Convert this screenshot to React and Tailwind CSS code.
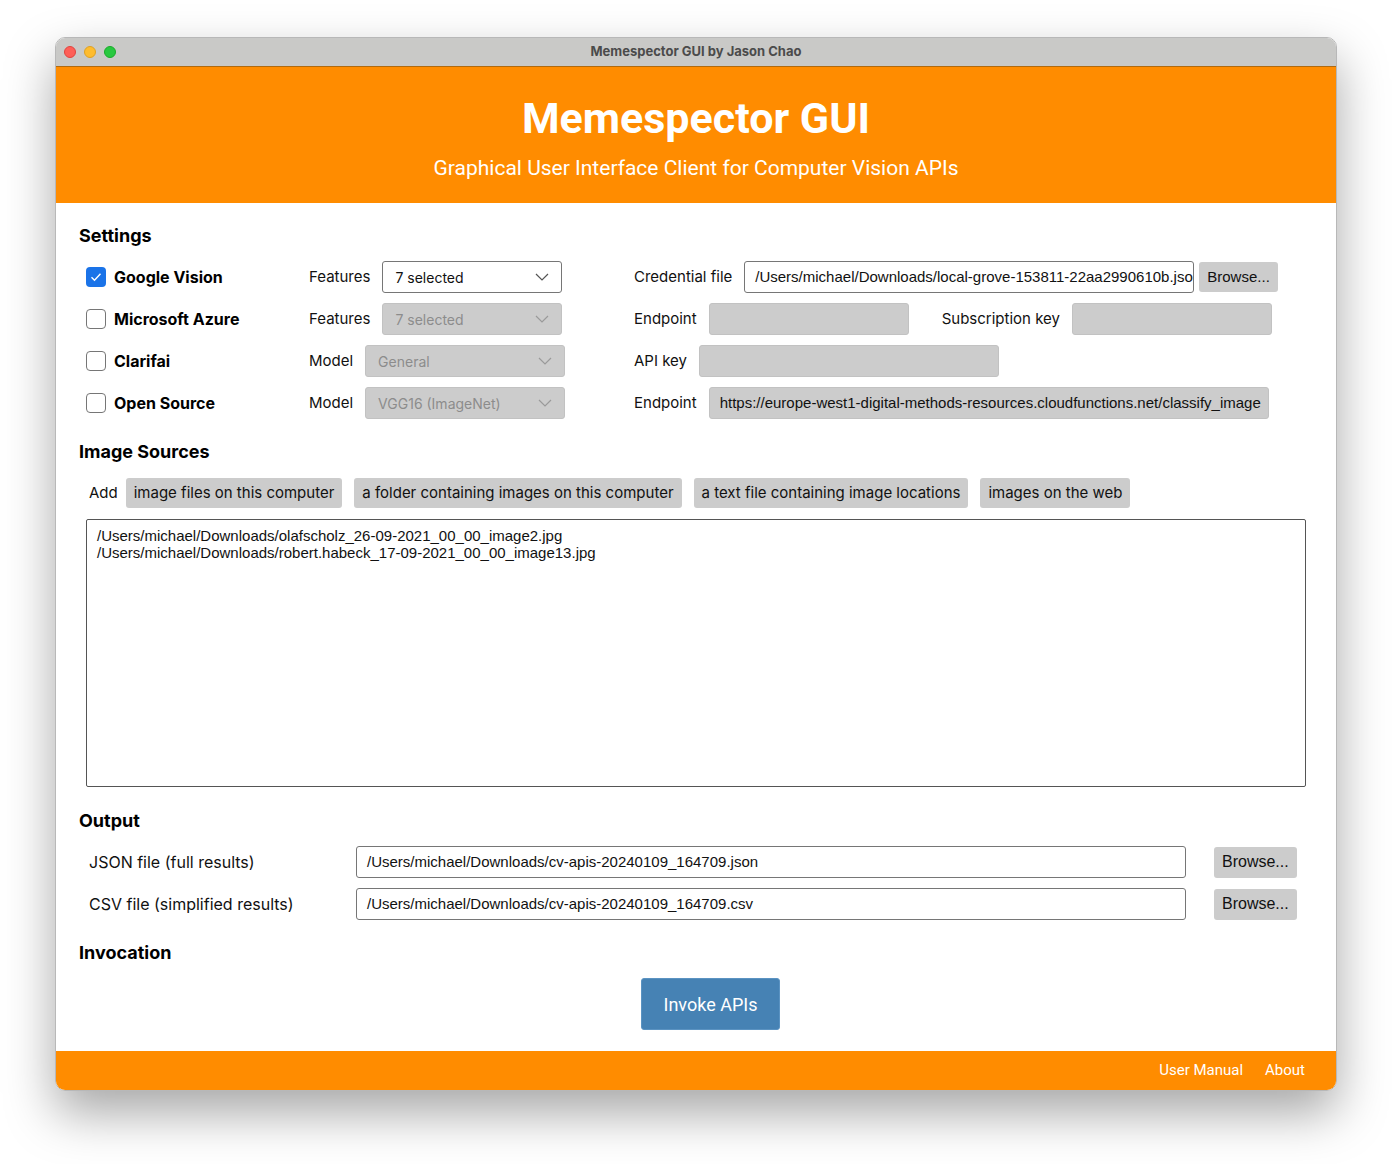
import React from 'react';

const Chevron = ({ className = '' }) => (
  <svg width="14" height="8" viewBox="0 0 14 8" className={className} fill="none">
    <path d="M1 1l6 6 6-6" stroke="currentColor" strokeWidth="1.2" />
  </svg>
);

const Checkbox = ({ checked }) =>
  checked ? (
    <div className="w-[20px] h-[20px] rounded-[4px] bg-[#1a73e8] flex items-center justify-center">
      <svg width="12" height="10" viewBox="0 0 12 10" fill="none">
        <path d="M1.5 5.2l3 3 6-6.5" stroke="white" strokeWidth="1.4" />
      </svg>
    </div>
  ) : (
    <div className="w-[20px] h-[20px] rounded-[4px] bg-white border border-[#767676]" />
  );

const Select = ({ value, width, disabled }) => (
  <div
    className={`${width} h-[32px] rounded-[3px] flex items-center justify-between pl-3 pr-3 text-[14px] ${
      disabled
        ? 'bg-[#cccccc] border border-[#c2c2c2] text-[#8c8c8c]'
        : 'bg-white border border-[#767676] text-[#111]'
    }`}
  >
    <span>{value}</span>
    <Chevron className={disabled ? 'text-[#9a9a9a]' : 'text-[#555]'} />
  </div>
);

const Input = ({ value = '', width, disabled }) => (
  <div
    className={`${width} h-[32px] rounded-[3px] flex items-center px-[10px] text-[15px] overflow-hidden whitespace-nowrap font-['Liberation_Sans',sans-serif] ${
      disabled ? 'bg-[#cccccc] border border-[#c2c2c2] text-[#111]' : 'bg-white border border-[#767676] text-[#111]'
    }`}
  >
    {value}
  </div>
);

const GrayButton = ({ children, className = '' }) => (
  <button className={`h-[30px] px-2 rounded-[3px] bg-[#cccccc] text-[15px] text-[#111] ${className}`}>
    {children}
  </button>
);

const SettingRow = ({ checked, name, mid, right }) => (
  <div className="flex items-center h-[32px] text-[15px]">
    <div className="w-[223px] flex items-center gap-2">
      <Checkbox checked={checked} />
      <span className="text-[16px] font-bold text-black">{name}</span>
    </div>
    <div className="w-[325px] flex items-center gap-3">{mid}</div>
    <div className="flex items-center">{right}</div>
  </div>
);

export default function App() {
  return (
    <div className="min-h-screen bg-white pt-[37px] pl-[55px] font-['Inter',sans-serif]">
      <div className="w-[1282px] rounded-[10px] overflow-hidden shadow-[0_22px_50px_rgba(0,0,0,0.35)] border border-[#b8b8b8]">
        {/* title bar */}
        <div className="h-[29px] bg-[#c9c9c7] border-b border-[#b06a10] flex items-center relative">
          <div className="flex items-center gap-2 pl-[8px]">
            <div className="w-[12px] h-[12px] rounded-full bg-[#fe5f57] border border-[#e0443e]" />
            <div className="w-[12px] h-[12px] rounded-full bg-[#febc2e] border border-[#dea123]" />
            <div className="w-[12px] h-[12px] rounded-full bg-[#28c840] border border-[#1aab29]" />
          </div>
          <div className="absolute inset-0 flex items-center justify-center text-[13px] font-bold text-[#4b4b4b]">
            Memespector GUI by Jason Chao
          </div>
        </div>

        {/* header */}
        <div className="h-[136px] bg-[#ff8c00] flex flex-col items-center text-white">
          <h1 className="mt-[27px] text-[43px] leading-[48px] font-bold font-['Roboto',sans-serif]">Memespector GUI</h1>
          <p className="mt-[13px] text-[21px] leading-[26px] font-['Roboto',sans-serif]">
            Graphical User Interface Client for Computer Vision APIs
          </p>
        </div>

        {/* body */}
        <div className="bg-white pl-[23px] pr-[29px] pt-[21px] pb-[21px] text-[16px] text-[#111]">
          <h2 className="text-[18px] leading-[24px] font-bold text-black">Settings</h2>
          <div className="mt-[13px] pl-[7px] flex flex-col gap-[10px]">
            <SettingRow
              checked
              name="Google Vision"
              mid={
                <>
                  <span>Features</span>
                  <Select value="7 selected" width="w-[180px]" />
                </>
              }
              right={
                <>
                  <span>Credential file</span>
                  <Input
                    width="w-[450px] ml-3"
                    value="/Users/michael/Downloads/local-grove-153811-22aa2990610b.json"
                  />
                  <GrayButton className="ml-[5px] font-['Liberation_Sans',sans-serif]">Browse...</GrayButton>
                </>
              }
            />
            <SettingRow
              name="Microsoft Azure"
              mid={
                <>
                  <span>Features</span>
                  <Select value="7 selected" width="w-[180px]" disabled />
                </>
              }
              right={
                <>
                  <span>Endpoint</span>
                  <Input width="w-[200px] ml-3" disabled />
                  <span className="ml-[33px]">Subscription key</span>
                  <Input width="w-[200px] ml-3" disabled />
                </>
              }
            />
            <SettingRow
              name="Clarifai"
              mid={
                <>
                  <span>Model</span>
                  <Select value="General" width="w-[200px]" disabled />
                </>
              }
              right={
                <>
                  <span>API key</span>
                  <Input width="w-[300px] ml-3" disabled />
                </>
              }
            />
            <SettingRow
              name="Open Source"
              mid={
                <>
                  <span>Model</span>
                  <Select value="VGG16 (ImageNet)" width="w-[200px]" disabled />
                </>
              }
              right={
                <>
                  <span>Endpoint</span>
                  <Input
                    width="w-[560px] ml-3"
                    disabled
                    value="https://europe-west1-digital-methods-resources.cloudfunctions.net/classify_image"
                  />
                </>
              }
            />
          </div>

          <h2 className="mt-[21px] text-[18px] leading-[24px] font-bold text-black">Image Sources</h2>
          <div className="mt-[14px] pl-[10px] flex items-center gap-3">
            <span className="-mr-[4px] text-[15px]">Add</span>
            <GrayButton>image files on this computer</GrayButton>
            <GrayButton>a folder containing images on this computer</GrayButton>
            <GrayButton>a text file containing image locations</GrayButton>
            <GrayButton>images on the web</GrayButton>
          </div>
          <div className="mt-[11px] ml-[7px] w-[1220px] h-[268px] border border-[#555] rounded-[2px] px-[10px] py-[7px] text-[15px] leading-[17px] font-['Liberation_Sans',sans-serif] text-[#111]">
            <div>/Users/michael/Downloads/olafscholz_26-09-2021_00_00_image2.jpg</div>
            <div>/Users/michael/Downloads/robert.habeck_17-09-2021_00_00_image13.jpg</div>
          </div>

          <h2 className="mt-[22px] text-[18px] leading-[24px] font-bold text-black">Output</h2>
          <div className="mt-[13px] pl-[10px] flex flex-col gap-[10px]">
            <div className="flex items-center h-[32px]">
              <span className="w-[267px]">JSON file (full results)</span>
              <Input width="w-[830px]" value="/Users/michael/Downloads/cv-apis-20240109_164709.json" />
              <GrayButton className="ml-[28px] h-[31px] font-['Liberation_Sans',sans-serif] text-[16px]">Browse...</GrayButton>
            </div>
            <div className="flex items-center h-[32px]">
              <span className="w-[267px]">CSV file (simplified results)</span>
              <Input width="w-[830px]" value="/Users/michael/Downloads/cv-apis-20240109_164709.csv" />
              <GrayButton className="ml-[28px] h-[31px] font-['Liberation_Sans',sans-serif] text-[16px]">Browse...</GrayButton>
            </div>
          </div>

          <h2 className="mt-[21px] text-[18px] leading-[24px] font-bold text-black">Invocation</h2>
          <div className="mt-[13px] pl-[562px]">
            <button className="w-[139px] h-[52px] rounded-[3px] bg-[#4682b4] border border-[#5b93c2] text-white text-[18px] font-['Roboto',sans-serif]">
              Invoke APIs
            </button>
          </div>
        </div>

        {/* footer */}
        <div className="h-[39px] bg-[#ff8c00] flex items-center justify-end gap-[22px] pr-[31px] text-[15px] text-white font-['Roboto',sans-serif]">
          <span>User Manual</span>
          <span>About</span>
        </div>
      </div>
    </div>
  );
}
